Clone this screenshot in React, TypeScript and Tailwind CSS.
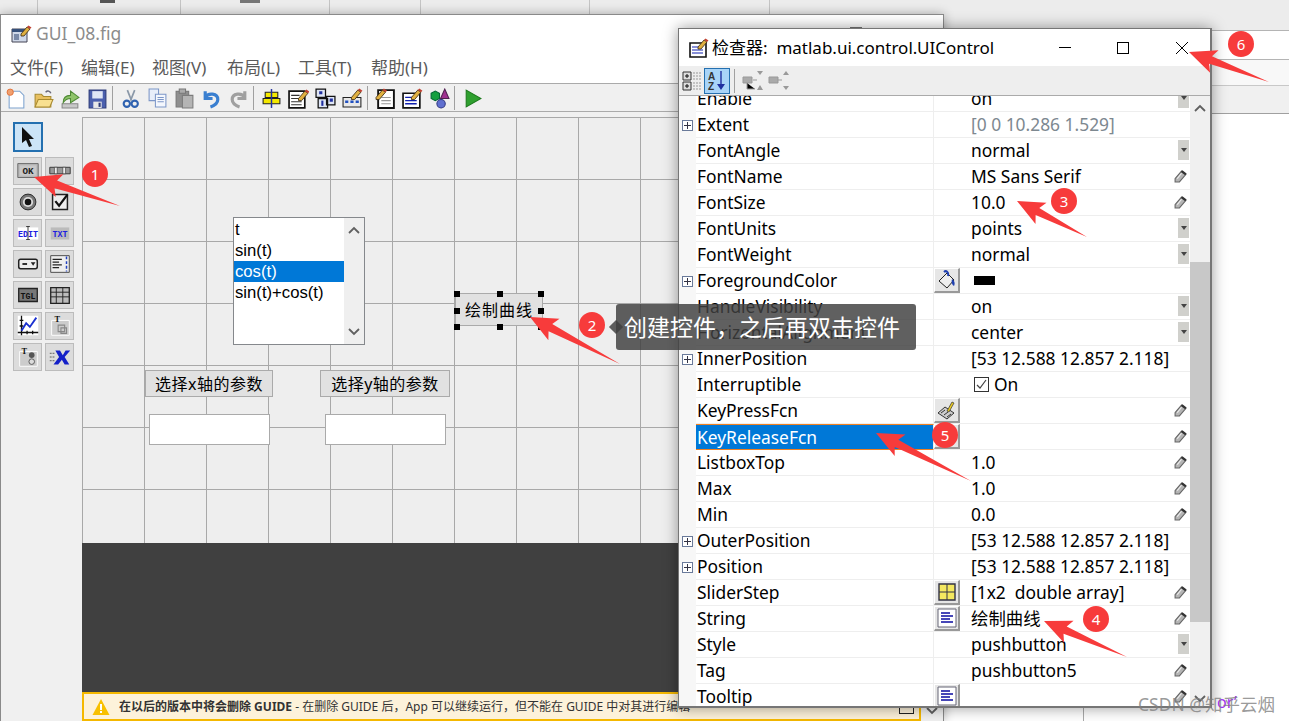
import React from 'react';

const CJK = "font-['Noto_Sans','Noto_Sans_CJK_SC',sans-serif]";

// pencil overlay shared by a few of the document icons
const Pencil = ({ x = 0, y = 0 }: { x?: number; y?: number }) => (
  <g transform={`translate(${x} ${y})`}>
    <path d="M0 8 L6 1 L9 3 L3 10 L0 10 Z" fill="#e0b040" stroke="#3a2a10" strokeWidth="0.8" />
    <path d="M6 1 L7.5 -0.5 L10.5 1.5 L9 3 Z" fill="#c04030" />
  </g>
);

const toolIcons: Record<string, React.ReactNode> = {
  new: (
    <>
      <path d="M3 3h10l4 4v12H3z" fill="#fff" stroke="#7da2ce" />
      <circle cx="4" cy="4" r="3" fill="#f0a070" stroke="#e06a30" strokeWidth="0.8" />
    </>
  ),
  open: (
    <>
      <path d="M2 6h6l2 2h7v10H2z" fill="#e8c060" stroke="#a88a30" />
      <path d="M2 18l3-7h14l-3 7z" fill="#f8e090" stroke="#a88a30" />
      <path d="M12 4c2-2 4-1 5 1" fill="none" stroke="#667" strokeWidth="1.4" />
    </>
  ),
  export: (
    <>
      <path d="M2 15h15v4H2z" fill="#c8c8c8" stroke="#888" />
      <path d="M3 14c0-5 3-7 7-7V3l8 6-8 5v-4c-3 0-5 1-7 4z" fill="#8fc46a" stroke="#4f8a35" />
    </>
  ),
  save: (
    <>
      <path d="M2 2h16v17H2z" fill="#4a5fae" stroke="#2c3a78" />
      <path d="M5 3h10v7H5z" fill="#dfe6f5" />
      <path d="M6 13h8v6H6z" fill="#e8e8e8" />
      <path d="M11 14h2v4h-2z" fill="#2c3a78" />
    </>
  ),
  cut: (
    <>
      <path d="M7 2l4 10M14 2l-4 10" stroke="#8a98a8" strokeWidth="1.6" fill="none" />
      <circle cx="6.5" cy="15" r="3" fill="none" stroke="#2f62b0" strokeWidth="2" />
      <circle cx="14" cy="15" r="3" fill="none" stroke="#2f62b0" strokeWidth="2" />
    </>
  ),
  copy: (
    <>
      <path d="M2 1h9v11H2z" fill="#e8eefa" stroke="#7d97c8" />
      <path d="M8 6h10v12H8z" fill="#f4f7fd" stroke="#7d97c8" />
      <path d="M10 9h6M10 11h6M10 13h6" stroke="#7d97c8" />
    </>
  ),
  paste: (
    <>
      <path d="M2 3h12v15H2z" fill="#8f8f8f" stroke="#777" />
      <path d="M5 1h6v4H5z" fill="#aaa" stroke="#777" />
      <path d="M8 7h10v12H8z" fill="#b4b4b4" stroke="#7c7c7c" />
    </>
  ),
  undo: <path d="M4 3v7h7M4 9c3-5 12-4 12 2 0 4-4 6-7 7" fill="none" stroke="#3a7fd0" strokeWidth="3" />,
  redo: <path d="M16 3v7H9M16 9C13 4 4 5 4 11c0 4 4 6 7 7" fill="none" stroke="#a0a0a0" strokeWidth="3" />,
  align: (
    <>
      <path d="M4 4h12v5H4zM2 10h16v5H2z" fill="#f4e800" stroke="#222" />
      <path d="M10 1v18" stroke="#2030a0" strokeWidth="1.4" />
    </>
  ),
  menu: (
    <>
      <path d="M1 3h15v16H1z" fill="#fff" stroke="#111" strokeWidth="1.6" />
      <path d="M3 7h8M3 10h10M3 13h10M3 16h10" stroke="#333" />
      <Pencil x={10} y={2} />
    </>
  ),
  tab: (
    <>
      <path d="M1 1h9v8H1zM11 8h8v8h-8zM3 10h9v9H3z" fill="#dfe6f5" stroke="#111" strokeWidth="1.2" />
      <path d="M4 3h3v3H4zM14 10h3v3h-3z" fill="#2030a0" />
      <path d="M7 12v5" stroke="#2030a0" strokeWidth="2" />
    </>
  ),
  bar: (
    <>
      <path d="M1 9h17v9H1z" fill="#e8e8e8" stroke="#222" />
      <path d="M3 13h3M8 13h3M13 13h3" stroke="#2050c0" strokeWidth="2.4" />
      <Pencil x={9} y={1} />
    </>
  ),
  note: (
    <>
      <path d="M3 2h15v17H3z" fill="#fff" stroke="#111" strokeWidth="1.8" />
      <path d="M6 9h9M6 12h9M6 15h9" stroke="#999" />
      <Pencil x={1} y={1} />
    </>
  ),
  prop: (
    <>
      <path d="M1 5h16v14H1z" fill="#fff" stroke="#111" strokeWidth="1.6" />
      <path d="M3 9h8M3 12h11M3 15h11" stroke="#1020b0" strokeWidth="1.2" />
      <Pencil x={9} y={1} />
    </>
  ),
  browser: (
    <>
      <path d="M2 5l4-2 4 2v5l-4 2-4-2z" fill="#14a040" stroke="#063" />
      <path d="M15 1l4 9h-8z" fill="#a03090" stroke="#502050" />
      <circle cx="11.5" cy="15" r="4" fill="#6070d0" stroke="#303880" />
    </>
  ),
  run: <path d="M4 2l14 8-14 8z" fill="#2fa02f" stroke="#1d7a1d" />,
};

const toolbarGroups = [
  ['new', 'open', 'export', 'save'],
  ['cut', 'copy', 'paste', 'undo', 'redo'],
  ['align', 'menu', 'tab', 'bar'],
  ['note', 'prop', 'browser'],
  ['run'],
];

const menuItems = [
  { label: '文件(F)', cls: 'w-[71px]' },
  { label: '编辑(E)', cls: 'w-[71px]' },
  { label: '视图(V)', cls: 'w-[75px]' },
  { label: '布局(L)', cls: 'w-[71px]' },
  { label: '工具(T)', cls: 'w-[73px]' },
  { label: '帮助(H)', cls: 'w-[71px]' },
];

const paletteIcons: React.ReactNode[] = [
  <g key="ok">
    <path d="M3 6h22v15H3z" fill="#b8b8b8" stroke="#666" />
    <path d="M5 8h18v11H5z" fill="#c8c8c8" />
    <text x="14" y="17" textAnchor="middle" fontSize="10" fontWeight="700" fontFamily="Liberation Mono" fill="#222">OK</text>
  </g>,
  <g key="slider">
    <path d="M3 10h22v7H3z" fill="#999" stroke="#333" />
    <path d="M8 10h3v7H8zM17 10h3v7h-3z" fill="#eee" stroke="#222" strokeWidth="0.6" />
  </g>,
  <g key="radio">
    <circle cx="14" cy="14" r="8.5" fill="#777" stroke="#222" />
    <circle cx="14" cy="14" r="5.5" fill="#ddd" />
    <circle cx="14" cy="14" r="3.5" fill="#111" />
  </g>,
  <g key="check">
    <path d="M6 6h16v16H6z" fill="#eee" stroke="#222" strokeWidth="1.6" />
    <path d="M9 13l4 5 9-12" fill="none" stroke="#111" strokeWidth="2.4" />
  </g>,
  <g key="edit">
    <path d="M3 8h22v13H3z" fill="#fff" />
    <text x="14" y="18" textAnchor="middle" fontSize="9" fontWeight="700" fontFamily="Liberation Mono" fill="#2020e0">EDIT</text>
    <path d="M14 7v14M12 7h4M12 21h4" stroke="#333" />
  </g>,
  <g key="txt">
    <path d="M4 8h20v13H4z" fill="#bbb" />
    <text x="14" y="18" textAnchor="middle" fontSize="9" fontWeight="700" fontFamily="Liberation Mono" fill="#2020e0">TXT</text>
  </g>,
  <g key="popup">
    <rect x="4" y="9" width="20" height="10" rx="2" fill="#eee" stroke="#222" strokeWidth="1.6" />
    <path d="M8 14h5" stroke="#222" strokeWidth="2" />
    <path d="M17 12h5l-2.500 4z" fill="#222" />
  </g>,
  <g key="list">
    <path d="M4 5h20v18H4z" fill="#eee" stroke="#444" />
    <path d="M6 9h10M6 12h7M6 15h10M6 18h7" stroke="#222" strokeWidth="1.3" />
    <path d="M21 6v16" stroke="#2040c0" strokeWidth="1.6" strokeDasharray="3 2" />
  </g>,
  <g key="tgl">
    <path d="M4 7h20v14H4z" fill="#777" stroke="#222" strokeWidth="1.4" />
    <text x="14" y="18" textAnchor="middle" fontSize="9" fontWeight="700" fontFamily="Liberation Mono" fill="#111">TGL</text>
  </g>,
  <g key="table">
    <path d="M4 6h20v17H4z" fill="#bbb" stroke="#222" strokeWidth="1.4" />
    <path d="M4 11h20M4 16h20M10 6v17M17 6v17" stroke="#222" />
  </g>,
  <g key="axes">
    <path d="M3 3h22v21H3z" fill="#fff" />
    <path d="M7 3v21M3 21h22M5 8h4M5 14h4M13 19v4M19 19v4" stroke="#111" strokeWidth="1.4" />
    <path d="M7 19l5-8 4 4 7-10" fill="none" stroke="#1a30d0" strokeWidth="2" />
  </g>,
  <g key="panel">
    <path d="M5 8h19v16H5z" fill="#ccc" stroke="#fff" />
    <text x="8" y="10" fontSize="9" fontWeight="700" fontFamily="Liberation Serif" fill="#111">T</text>
    <path d="M12 13h7v7h-7zM15 16h6v6h-6z" fill="none" stroke="#888" strokeWidth="1.2" />
  </g>,
  <g key="group">
    <path d="M5 8h19v16H5z" fill="#ccc" stroke="#fff" />
    <text x="7" y="11" fontSize="9" fontWeight="700" fontFamily="Liberation Serif" fill="#111">T</text>
    <circle cx="18" cy="12" r="3" fill="#555" />
    <circle cx="18" cy="19" r="3" fill="#ddd" stroke="#555" />
  </g>,
  <g key="activex">
    <path d="M3 10h6M3 14h6M3 18h6" stroke="#555" strokeDasharray="2 1" />
    <path d="M9 7h5l3 5 3-5h5l-6 7 5 8h-5l-3-5-4 5H7l6-8z" fill="#1420c8" />
  </g>,
];

type RowKind = 'dd' | 'pen' | 'none';
interface Row {
  name: string;
  value?: string;
  expand?: boolean;
  kind: RowKind;
  btn?: 'fill' | 'key' | 'grid' | 'text';
  muted?: boolean;
  selected?: boolean;
  swatch?: boolean;
  checkbox?: boolean;
}

const rows: Row[] = [
  { name: 'Enable', value: 'on', kind: 'dd' },
  { name: 'Extent', value: '[0 0 10.286 1.529]', expand: true, kind: 'none', muted: true },
  { name: 'FontAngle', value: 'normal', kind: 'dd' },
  { name: 'FontName', value: 'MS Sans Serif', kind: 'pen' },
  { name: 'FontSize', value: '10.0', kind: 'pen' },
  { name: 'FontUnits', value: 'points', kind: 'dd' },
  { name: 'FontWeight', value: 'normal', kind: 'dd' },
  { name: 'ForegroundColor', expand: true, kind: 'none', btn: 'fill', swatch: true },
  { name: 'HandleVisibility', value: 'on', kind: 'dd' },
  { name: 'HorizontalAlignment', value: 'center', kind: 'dd' },
  { name: 'InnerPosition', value: '[53 12.588 12.857 2.118]', expand: true, kind: 'none' },
  { name: 'Interruptible', kind: 'none', checkbox: true },
  { name: 'KeyPressFcn', kind: 'pen', btn: 'key' },
  { name: 'KeyReleaseFcn', kind: 'pen', btn: 'key', selected: true },
  { name: 'ListboxTop', value: '1.0', kind: 'pen' },
  { name: 'Max', value: '1.0', kind: 'pen' },
  { name: 'Min', value: '0.0', kind: 'pen' },
  { name: 'OuterPosition', value: '[53 12.588 12.857 2.118]', expand: true, kind: 'none' },
  { name: 'Position', value: '[53 12.588 12.857 2.118]', expand: true, kind: 'none' },
  { name: 'SliderStep', value: '[1x2  double array]', kind: 'pen', btn: 'grid' },
  { name: 'String', value: '绘制曲线', kind: 'pen', btn: 'text' },
  { name: 'Style', value: 'pushbutton', kind: 'dd' },
  { name: 'Tag', value: 'pushbutton5', kind: 'pen' },
  { name: 'Tooltip', kind: 'pen', btn: 'text' },
];

const TextLines = () => (
  <svg width="20" height="20" viewBox="0 0 20 20">
    <path d="M1 1h18v18H1z" fill="#fff" stroke="#667" />
    <path d="M4 5h9M4 8h12M4 11h9M4 14h12" stroke="#0a0aa0" strokeWidth="1.3" />
  </svg>
);

const RowButton = ({ type }: { type: NonNullable<Row['btn']> }) => (
  <div className="flex h-[25px] w-[26px] items-center justify-center border-t border-l border-t-white border-l-white border-r-2 border-b-2 border-r-[#999] border-b-[#999] bg-[#e6e6e6]">
    {type === 'text' && <TextLines />}
    {type === 'grid' && (
      <svg width="18" height="18" viewBox="0 0 18 18">
        <path d="M1 1h16v16H1z" fill="#f4e860" stroke="#334" strokeWidth="1.4" />
        <path d="M9 1v16M1 9h16" stroke="#334" />
      </svg>
    )}
    {type === 'fill' && (
      <svg width="20" height="20" viewBox="0 0 20 20">
        <path d="M2 11l8-8 7 7-7 8z" fill="#eee" stroke="#222" />
        <path d="M7 2c2-2 5 0 4 4" fill="none" stroke="#2040b0" strokeWidth="2" />
        <path d="M15 9c3 2 3 5 2 7-2-1-3-4-2-7z" fill="#2040b0" />
      </svg>
    )}
    {type === 'key' && (
      <svg width="20" height="20" viewBox="0 0 20 20">
        <path d="M1 13l7-6 9 6-7 6z" fill="#ccc" stroke="#333" />
        <path d="M4 13l4-3M7 15l4-3M10 17l4-3" stroke="#333" />
        <path d="M10 11l5-9 2 1-5 9z" fill="#e8c820" stroke="#333" strokeWidth="0.7" />
      </svg>
    )}
  </div>
);

const RowPencil = () => (
  <svg width="13" height="13" viewBox="0 0 12 12">
    <path d="M1 8l6-7 4 3-6 7H1z" fill="#b4b4b4" stroke="#666" />
    <path d="M7 1l4 3" stroke="#333" strokeWidth="2.200" />
    <path d="M3 8l4-5" stroke="#eee" />
  </svg>
);

const Handle = ({ className }: { className: string }) => (
  <div className={`absolute h-[6px] w-[6px] bg-black ${className}`} />
);

const Chevron = ({ up }: { up?: boolean }) => (
  <svg width="12" height="8" viewBox="0 0 12 8">
    <path d={up ? 'M1 7l5-5 5 5' : 'M1 1l5 5 5-5'} fill="none" stroke="#606060" strokeWidth="1.8" />
  </svg>
);

// red callout arrow, tapered from the head to a sharp tail
const arrowPoints = (tx: number, ty: number, ex: number, ey: number) => {
  const len = Math.hypot(ex - tx, ey - ty);
  const ux = (ex - tx) / len;
  const uy = (ey - ty) / len;
  const at = (d: number, w: number) => `${tx + ux * d - uy * w},${ty + uy * d + ux * w}`;
  return [at(0, 0), at(27, 12), at(23, 4), at(len, 0), at(23, -4), at(27, -12)].join(' ');
};

const arrows = [
  [34, 177, 120, 206],
  [530, 317, 620, 364],
  [1017, 201, 1087, 237],
  [1044, 621, 1127, 657],
  [876, 433, 971, 481],
  [1189, 52, 1269, 82],
];

const badges = [
  { n: 1, cls: 'left-[82px] top-[161px]' },
  { n: 2, cls: 'left-[579px] top-[312px]' },
  { n: 3, cls: 'left-[1051px] top-[188px]' },
  { n: 4, cls: 'left-[1083px] top-[606px]' },
  { n: 5, cls: 'left-[932px] top-[422px]' },
  { n: 6, cls: 'left-[1228px] top-[31px]' },
];

const backdropCells = ['w-[38px]', 'w-[143px]', 'w-[149px]', 'w-[91px]', 'w-[169px]', 'w-[180px]'];

const GuideWindow = () => (
  <div className="absolute left-0 top-[14px] flex h-[707px] w-[944px] flex-col border-t border-l border-r border-[#8a8a8a] bg-[#f0f0f0] shadow-[0_0_10px_rgba(0,0,0,0.3)]">
    <div className="relative flex h-[37px] items-center gap-[3px] bg-white pl-[10px]">
      <svg width="22" height="20" viewBox="0 0 22 20">
        <path d="M1 5h15v13H1z" fill="#cfd8e8" stroke="#445" />
        <path d="M1 5h15v3H1z" fill="#36507a" />
        <path d="M3 10h5v6H3z" fill="#7a8aa8" />
        <Pencil x={10} y={2} />
      </svg>
      <span className={`${CJK} text-[17.5px] text-[#8c8c8c]`}>GUI_08.fig</span>
      <div className="absolute left-[849px] top-[12px] h-[12px] w-[12px] border border-[#777]" />
    </div>
    <div className={`${CJK} flex h-[32px] items-center border-b border-[#aaa] bg-white pl-[9px] text-[17px] text-[#5a5a5a]`}>
      {menuItems.map((m) => (
        <span key={m.label} className={`whitespace-nowrap ${m.cls}`}>{m.label}</span>
      ))}
    </div>
    <div className="flex h-[28px] items-center border-b border-[#aaa] pl-[2px] pt-px">
      {toolbarGroups.map((group, i) => (
        <div key={i} className={`flex h-[24px] items-center pr-[1px] ${i < toolbarGroups.length - 1 ? 'mr-[4px] border-r border-[#a0a0a0]' : ''}`}>
          {group.map((name) => (
            <div key={name} className="flex w-[27px] items-center justify-center">
              <svg width="21" height="21" viewBox="0 0 20 20">{toolIcons[name]}</svg>
            </div>
          ))}
        </div>
      ))}
    </div>
    <div className="flex min-h-0 flex-1 pt-[5px]">
      <div className="w-[81px] shrink-0 pt-[5px] pl-[12px]">
        <div className="mb-[5px] flex h-[30px] w-[30px] items-center justify-center border-2 border-[#2470b0] bg-[#cce4f7]">
          <svg width="18" height="22" viewBox="0 0 18 22">
            <path d="M3 1v16l4-3 3 7 3-1-3-7h5z" fill="#111" />
          </svg>
        </div>
        <div className="grid w-[61px] grid-cols-2 gap-[3px]">
          {paletteIcons.map((icon, i) => (
            <div key={i} className="flex h-[28px] w-[29px] items-center justify-center border border-[#bcbcbc] bg-[#dcdcdc]">
              <svg width="26" height="26" viewBox="0 0 28 28">{icon}</svg>
            </div>
          ))}
        </div>
      </div>
      <div className="flex min-w-0 flex-1 flex-col">
        <div className="relative flex-1 bg-[#eeeeee] bg-[linear-gradient(#a8a8a8_1px,transparent_1px),linear-gradient(90deg,#a8a8a8_1px,transparent_1px)] bg-[size:62px_62px]">
          {/* list box */}
          <div className="absolute left-[151px] top-[100px] flex h-[128px] w-[132px] border border-[#85888c] bg-white font-['Liberation_Sans',sans-serif] text-[16.7px] text-black">
            <div className="flex-1 pt-px">
              {['t', 'sin(t)', 'cos(t)', 'sin(t)+cos(t)'].map((item) => (
                <div key={item} className={`h-[21px] whitespace-nowrap pl-px leading-[21px] ${item === 'cos(t)' ? 'bg-[#0078d7] text-white' : ''}`}>
                  {item}
                </div>
              ))}
            </div>
            <div className="flex w-[20px] flex-col items-center justify-between bg-[#efefef] py-[8px]">
              <Chevron up />
              <Chevron />
            </div>
          </div>
          {/* selected push button */}
          <div className={`${CJK} absolute left-[373px] top-[176px] flex h-[33px] w-[88px] items-center justify-center border border-[#aaa] bg-[#e1e1e1] text-[16px] tracking-[1px] text-black`}>
            绘制曲线
            <Handle className="-left-[2px] -top-[3px]" />
            <Handle className="left-[41px] -top-[3px]" />
            <Handle className="-right-[2px] -top-[3px]" />
            <Handle className="-left-[2px] top-[14px]" />
            <Handle className="-right-[2px] top-[14px]" />
            <Handle className="-left-[2px] -bottom-[5px]" />
            <Handle className="left-[41px] -bottom-[5px]" />
            <Handle className="-right-[2px] -bottom-[5px]" />
          </div>
          <div className={`${CJK} absolute left-[63px] top-[253px] flex h-[27px] w-[128px] items-center justify-center border border-[#aaa] bg-[#e1e1e1] text-[16px] tracking-[0.5px] text-black`}>
            选择x轴的参数
          </div>
          <div className={`${CJK} absolute left-[238px] top-[253px] flex h-[27px] w-[130px] items-center justify-center border border-[#aaa] bg-[#e1e1e1] text-[16px] tracking-[0.5px] text-black`}>
            选择y轴的参数
          </div>
          <div className="absolute left-[67px] top-[297px] h-[31px] w-[121px] border border-[#aaa] bg-white" />
          <div className="absolute left-[243px] top-[297px] h-[31px] w-[121px] border border-[#aaa] bg-white" />
        </div>
        <div className="h-[149px] shrink-0 bg-[#404040]" />
        <div className="flex h-[29px] shrink-0">
          <div className={`${CJK} relative flex min-w-0 flex-1 items-center gap-[9px] overflow-hidden border-2 border-[#f5b800] bg-[#fdf2da] pl-[8px] text-[12px] text-[#333]`}>
            <svg className="shrink-0" width="18" height="18" viewBox="0 0 18 18">
              <path d="M9 1l8.500 16H.5z" fill="#f8c000" />
              <path d="M8 6h2v6H8zM8 13h2v2H8z" fill="#fff" />
            </svg>
            <span className="whitespace-nowrap">
              <b>在以后的版本中将会删除 GUIDE</b> - 在删除 GUIDE 后{'\uFF0C'}App 可以继续运行{'\uFF0C'}但不能在 GUIDE 中对其进行编辑
            </span>
            <div className="absolute right-[5px] top-[5px] h-[15px] w-[15px] border border-[#222]" />
          </div>
          <div className="flex w-[22px] shrink-0 items-end justify-center pb-[6px]">
            <Chevron />
          </div>
        </div>
      </div>
    </div>
  </div>
);

const Inspector = () => (
  <div className="absolute left-[678px] top-[28px] flex h-[680px] w-[534px] flex-col border-2 border-t border-l border-[#767676] bg-white shadow-[0_0_14px_rgba(0,0,0,0.4)]">
    <div className={`${CJK} flex h-[37px] shrink-0 items-center pl-[10px] text-[17px] text-black`}>
      <svg width="20" height="20" viewBox="0 0 20 20">{toolIcons.prop}</svg>
      <span className="ml-[3px]">检查器:&nbsp; matlab.ui.control.UIControl</span>
      <div className="ml-auto flex items-center">
        <div className="h-px w-[12px] bg-black" />
        <div className="ml-[46px] h-[12px] w-[12px] border border-black" />
        <svg className="ml-[47px] mr-[22px]" width="12" height="12" viewBox="0 0 12 12">
          <path d="M0 0l12 12M12 0L0 12" stroke="#000" />
        </svg>
      </div>
    </div>
    <div className="flex h-[30px] shrink-0 items-center gap-[2px] border-b border-[#aaa] bg-[#eeeeee] pl-[3px]">
      <svg width="20" height="22" viewBox="0 0 20 22">
        <path d="M1 2h8v8H1zM1 12h8v8H1z" fill="#ddd" stroke="#333" />
        <path d="M3 6h4M5 4v4M3 16h4M5 14v4" stroke="#111" />
        <path d="M11 3h8M11 6h8M11 9h8M11 13h8M11 16h8M11 19h8" stroke="#999" strokeDasharray="2 1" />
      </svg>
      <div className="flex h-[26px] w-[26px] items-center justify-center border border-[#2470b0] bg-[#a8d4f8]">
        <svg width="20" height="22" viewBox="0 0 20 22">
          <text x="1" y="10" fontSize="10" fontWeight="700" fontFamily="Liberation Sans" fill="#333">A</text>
          <text x="1" y="20" fontSize="10" fontWeight="700" fontFamily="Liberation Sans" fill="#333">Z</text>
          <path d="M14 1v14" stroke="#2030a0" strokeWidth="1.4" />
          <path d="M10 14h8l-4 6z" fill="#2030a0" />
        </svg>
      </div>
      <div className="ml-[2px] mr-[5px] h-[24px] w-px bg-[#a0a0a0]" />
      <svg width="24" height="22" viewBox="0 0 24 22">
        <path d="M1 7h9v6H1z" fill="#aaa" stroke="#999" />
        <path d="M5 13v6h8M11 10h4" stroke="#999" />
        <path d="M15 1h6l-3 4zM15 20h6l-3-5z" fill="#999" />
      </svg>
      <svg width="24" height="22" viewBox="0 0 24 22">
        <path d="M1 7h9v6H1z" fill="#aaa" stroke="#999" />
        <path d="M10 10h4" stroke="#999" />
        <path d="M15 5h6l-3-4zM15 16h6l-3 4z" fill="#999" />
      </svg>
    </div>
    <div className="flex min-h-0 flex-1">
      <div className={`${CJK} min-w-0 flex-1 overflow-hidden bg-[#f7f7f7] text-[17.4px] text-black`}>
        <div className="-mt-[10px]">
          {rows.map((row) => (
            <div key={row.name} className="flex h-[26px] items-stretch">
              <div className="flex w-[17px] shrink-0 items-center justify-center">
                {row.expand && (
                  <div className="flex h-[11px] w-[11px] items-center justify-center border border-[#6a7a9a] bg-white text-[11px] leading-none text-[#334]">
                    <svg width="7" height="7" viewBox="0 0 7 7">
                      <path d="M0 3.500h7M3.500 0v7" stroke="#334" />
                    </svg>
                  </div>
                )}
              </div>
              <div className={`flex w-[238px] shrink-0 items-center border-r pl-[1px] ${row.selected ? 'border-y border-y-[#f08020] border-r-[#eee] bg-[#0078d7] text-white' : 'border-b border-[#eeeeee] bg-white'}`}>
                {row.name}
              </div>
              <div className="relative flex min-w-0 flex-1 items-center border-b border-[#eeeeee] bg-white">
                {row.btn && (
                  <div className="absolute left-0 top-0">
                    <RowButton type={row.btn} />
                  </div>
                )}
                <div className={`whitespace-pre pl-[37px] ${row.muted ? 'text-[#7d8890]' : ''}`}>
                  {row.value}
                  {row.swatch && <div className="ml-[3px] h-[9px] w-[21px] bg-black" />}
                  {row.checkbox && (
                    <div className="ml-[3px] flex items-center gap-[5px]">
                      <div className="flex h-[15px] w-[15px] items-center justify-center border border-[#333]">
                        <svg width="11" height="11" viewBox="0 0 11 11">
                          <path d="M1 6l3 3 6-8" fill="none" stroke="#444" strokeWidth="1.2" />
                        </svg>
                      </div>
                      On
                    </div>
                  )}
                </div>
                {row.kind === 'dd' && (
                  <div className="absolute right-[1px] top-[2px] flex h-[20px] w-[11px] items-center justify-center bg-[#d0d0cc]">
                    <div className="h-0 w-0 border-x-[3px] border-t-[4px] border-x-transparent border-t-[#444]" />
                  </div>
                )}
                {row.kind === 'pen' && (
                  <div className="absolute right-[3px] top-[6px]">
                    <RowPencil />
                  </div>
                )}
              </div>
            </div>
          ))}
        </div>
      </div>
      <div className="flex w-[20px] shrink-0 flex-col items-center bg-[#f0f0f0] pt-[8px]">
        <Chevron up />
        <div className="mt-[150px] h-[360px] w-full bg-[#c8c8c8]" />
        <div className="mt-auto pb-[3px]">
          <Chevron />
        </div>
      </div>
    </div>
  </div>
);

export default function App() {
  return (
    <div className={`${CJK} relative h-[721px] w-[1289px] overflow-hidden bg-white`}>
      {/* desktop behind the windows */}
      <div className="flex h-[30px] bg-[#ececec]">
        {backdropCells.map((w) => (
          <div key={w} className={`border-r border-[#c4c4c4] ${w}`} />
        ))}
      </div>
      <div className="h-[30px] border-y border-[#b4b4b4] bg-white" />
      <div className="h-[25px] bg-[#f8f8f8]" />
      <div className="h-[29px] border-y border-[#c8c8c8] bg-[#f0f0f0] [border-bottom-color:#a0a0a0]" />
      <div className="absolute bottom-0 left-[1083px] h-[14px] w-px bg-[#aaa]" />
      <div className="absolute left-[100px] top-0 h-[3px] w-[15px] bg-[#555]" />
      <div className="absolute left-[240px] top-0 h-[3px] w-[20px] bg-[#777]" />

      <GuideWindow />
      <Inspector />

      {/* tooltip callout */}
      <div className="absolute left-[616px] top-[304px] flex h-[46px] w-[300px] items-center rounded-[3px] bg-[#404040]/[.83] pl-[8px] text-[23px] text-white">
        <div className="absolute -left-[5px] top-[18px] h-[10px] w-[10px] rotate-45 bg-[#404040]/[.83]" />
        {'创建控件\uFF0C之后再双击控件'}
      </div>

      {/* annotation arrows */}
      <svg className="pointer-events-none absolute left-0 top-0" width="1289" height="721">
        {arrows.map(([a, b, c, d]) => (
          <polygon key={`${a}-${b}`} points={arrowPoints(a, b, c, d)} fill="#f73b3b" />
        ))}
      </svg>
      {badges.map((b) => (
        <div key={b.n} className={`absolute flex h-[26px] w-[26px] items-center justify-center rounded-full bg-[#f73b3b] text-[15px] text-white ${b.cls}`}>
          {b.n}
        </div>
      ))}

      {/* watermark */}
      <div className="absolute left-[1217px] top-[690px] whitespace-nowrap text-[16px] text-[#a030f0]">or’</div>
      <div className="absolute left-[1138px] top-[691px] whitespace-nowrap text-[17.5px] text-[#808080]/80">
        CSDN @知乎云烟
      </div>
    </div>
  );
}
